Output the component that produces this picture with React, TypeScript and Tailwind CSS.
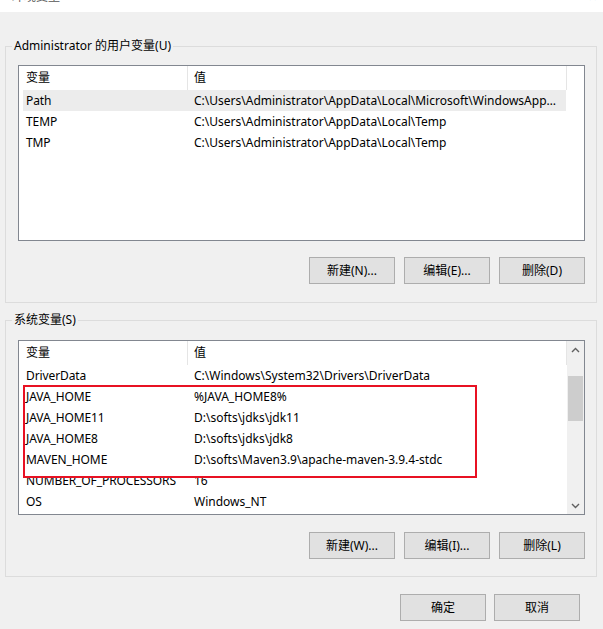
import React from "react";

type EnvVar = { name: string; value: string; selected?: boolean };

//user variables (top list)
const userVars: EnvVar[] = [
  {
    name: "Path",
    value: "C:\\Users\\Administrator\\AppData\\Local\\Microsoft\\WindowsApps;C:\\Program Files",
    selected: true,
  },
  { name: "TEMP", value: "C:\\Users\\Administrator\\AppData\\Local\\Temp" },
  { name: "TMP", value: "C:\\Users\\Administrator\\AppData\\Local\\Temp" },
];

//system variables (bottom list, scrolled)
const systemVars: EnvVar[] = [
  { name: "DriverData", value: "C:\\Windows\\System32\\Drivers\\DriverData" },
  { name: "JAVA_HOME", value: "%JAVA_HOME8%" },
  { name: "JAVA_HOME11", value: "D:\\softs\\jdks\\jdk11" },
  { name: "JAVA_HOME8", value: "D:\\softs\\jdks\\jdk8" },
  { name: "MAVEN_HOME", value: "D:\\softs\\Maven3.9\\apache-maven-3.9.4-stdc" },
  { name: "NUMBER_OF_PROCESSORS", value: "16" },
  { name: "OS", value: "Windows_NT" },
];

const WinButton = ({ children }: { children: React.ReactNode }) => (
  <button className="flex h-[27px] w-[86px] items-center justify-center border border-[#adadad] bg-[#e1e1e1] text-[12px] leading-none text-black">
    {children}
  </button>
);

const Chevron = ({ up }: { up?: boolean }) => (
  <svg width="9" height="6" viewBox="0 0 9 6">
    <path
      d={up ? "M1 5 L4.5 1.5 L8 5" : "M1 1 L4.5 4.5 L8 1"}
      fill="none"
      stroke="#606060"
      strokeWidth="1.4"
    />
  </svg>
);

const VarList = ({
  vars,
  height,
  scroll,
  marked,
}: {
  vars: EnvVar[];
  height: string;
  scroll?: boolean;
  marked?: boolean;
}) => (
  <div className={`relative flex border border-[#828790] bg-white ${height}`}>
    <div className="flex w-[548px] flex-col">
      {/* header */}
      <div className="flex h-[24px] shrink-0 items-center pl-[4px]">
        <div className="flex h-full w-[165px] items-center border-r border-[#e5e5e5] pl-[3px]">变量</div>
        <div className="flex h-full flex-1 items-center border-r border-[#e5e5e5] pl-[6px]">值</div>
      </div>
      {/* rows */}
      {vars.map((v) => (
        <div
          key={v.name}
          className={`mr-[1px] ml-[4px] flex h-[21px] shrink-0 items-center ${v.selected ? "bg-[#ececec]" : ""}`}
        >
          <div className="w-[165px] shrink-0 overflow-visible pl-[3px] tracking-[-0.1px] whitespace-nowrap">
            {v.name}
          </div>
          <div className="min-w-0 flex-1 truncate pr-[9px] pl-[6px]">{v.value}</div>
        </div>
      ))}
    </div>
    {/* scrollbar column */}
    {scroll ? (
      <div className="flex w-[17px] flex-col items-center bg-[#f0f0f0]">
        <div className="flex h-[17px] items-center justify-center">
          <Chevron up />
        </div>
        <div className="mt-[18px] h-[45px] w-[15px] bg-[#cdcdcd]" />
        <div className="flex-1" />
        <div className="flex h-[17px] items-center justify-center">
          <Chevron />
        </div>
      </div>
    ) : (
      <div className="w-[17px]" />
    )}
    {/* red highlight annotation */}
    {marked && (
      <div className="pointer-events-none absolute top-[44px] left-[4px] h-[93px] w-[454px] border-2 border-[#e81123]" />
    )}
  </div>
);

export default function App() {
  return (
    <div className="h-[629px] w-[603px] overflow-hidden bg-[#f0f0f0] font-['Noto_Sans','Noto_Sans_CJK_SC',sans-serif] text-[12px] text-black">
      {/* cut-off title bar */}
      <div className="flex h-[12px] justify-between overflow-hidden bg-white">
        <div className="-mt-[9px] pl-[12px] text-[12px] leading-[12px] text-[#555]">环境变量</div>
        <div className="-mt-[9px] pr-[6px] text-[11px] leading-[12px] text-[#777]">✕</div>
      </div>

      {/* user variables */}
      <fieldset className="mt-[26px] ml-[5px] w-[592px] border border-[#dcdcdc] pt-[11px] pr-[11px] pb-[18px] pl-[12px]">
        <legend className="-ml-[6px] px-[2px] text-[12px] leading-[16px]">Administrator 的用户变量(U)</legend>
        <VarList vars={userVars} height="h-[176px]" />
        <div className="mt-[16px] flex justify-end gap-[9px]">
          <WinButton>新建(N)...</WinButton>
          <WinButton>编辑(E)...</WinButton>
          <WinButton>删除(D)</WinButton>
        </div>
      </fieldset>

      {/* system variables */}
      <fieldset className="mt-[9px] ml-[5px] w-[592px] border border-[#dcdcdc] pt-[12px] pr-[11px] pb-[17px] pl-[12px]">
        <legend className="-ml-[6px] px-[2px] text-[12px] leading-[16px]">系统变量(S)</legend>
        <VarList vars={systemVars} height="h-[175px]" scroll marked />
        <div className="mt-[17px] flex justify-end gap-[9px]">
          <WinButton>新建(W)...</WinButton>
          <WinButton>编辑(I)...</WinButton>
          <WinButton>删除(L)</WinButton>
        </div>
      </fieldset>

      {/* dialog buttons */}
      <div className="mt-[17px] flex justify-end gap-[8px] pr-[23px]">
        <WinButton>确定</WinButton>
        <WinButton>取消</WinButton>
      </div>
    </div>
  );
}
